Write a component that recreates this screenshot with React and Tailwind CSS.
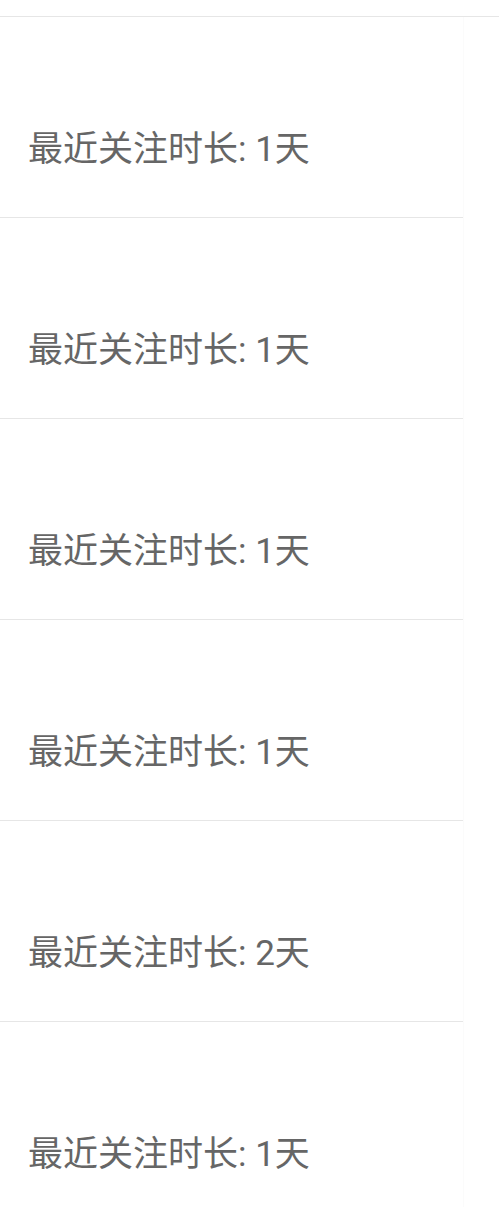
export default function App() {
  const items = ["1天", "1天", "1天", "1天", "2天", "1天"];
  return (
    <div className="w-[499px] h-[1207px] overflow-hidden bg-white" style={{ fontFamily: '"Roboto", "Noto Sans CJK SC", sans-serif' }}>
      <div className="h-[17px] border-b border-[#e6e6e6]" />
      <div className="w-[464px] border-r border-[#fbfbfb]">
        {items.map((d, i) => (
          <div key={i} className="h-[201px] border-b border-[#e6e6e6] flex items-end pb-[46px] pl-[28px]">
            <span className="text-[35px] leading-[42px] text-[#666666]">最近关注时长: {d}</span>
          </div>
        ))}
      </div>
    </div>
  );
}
